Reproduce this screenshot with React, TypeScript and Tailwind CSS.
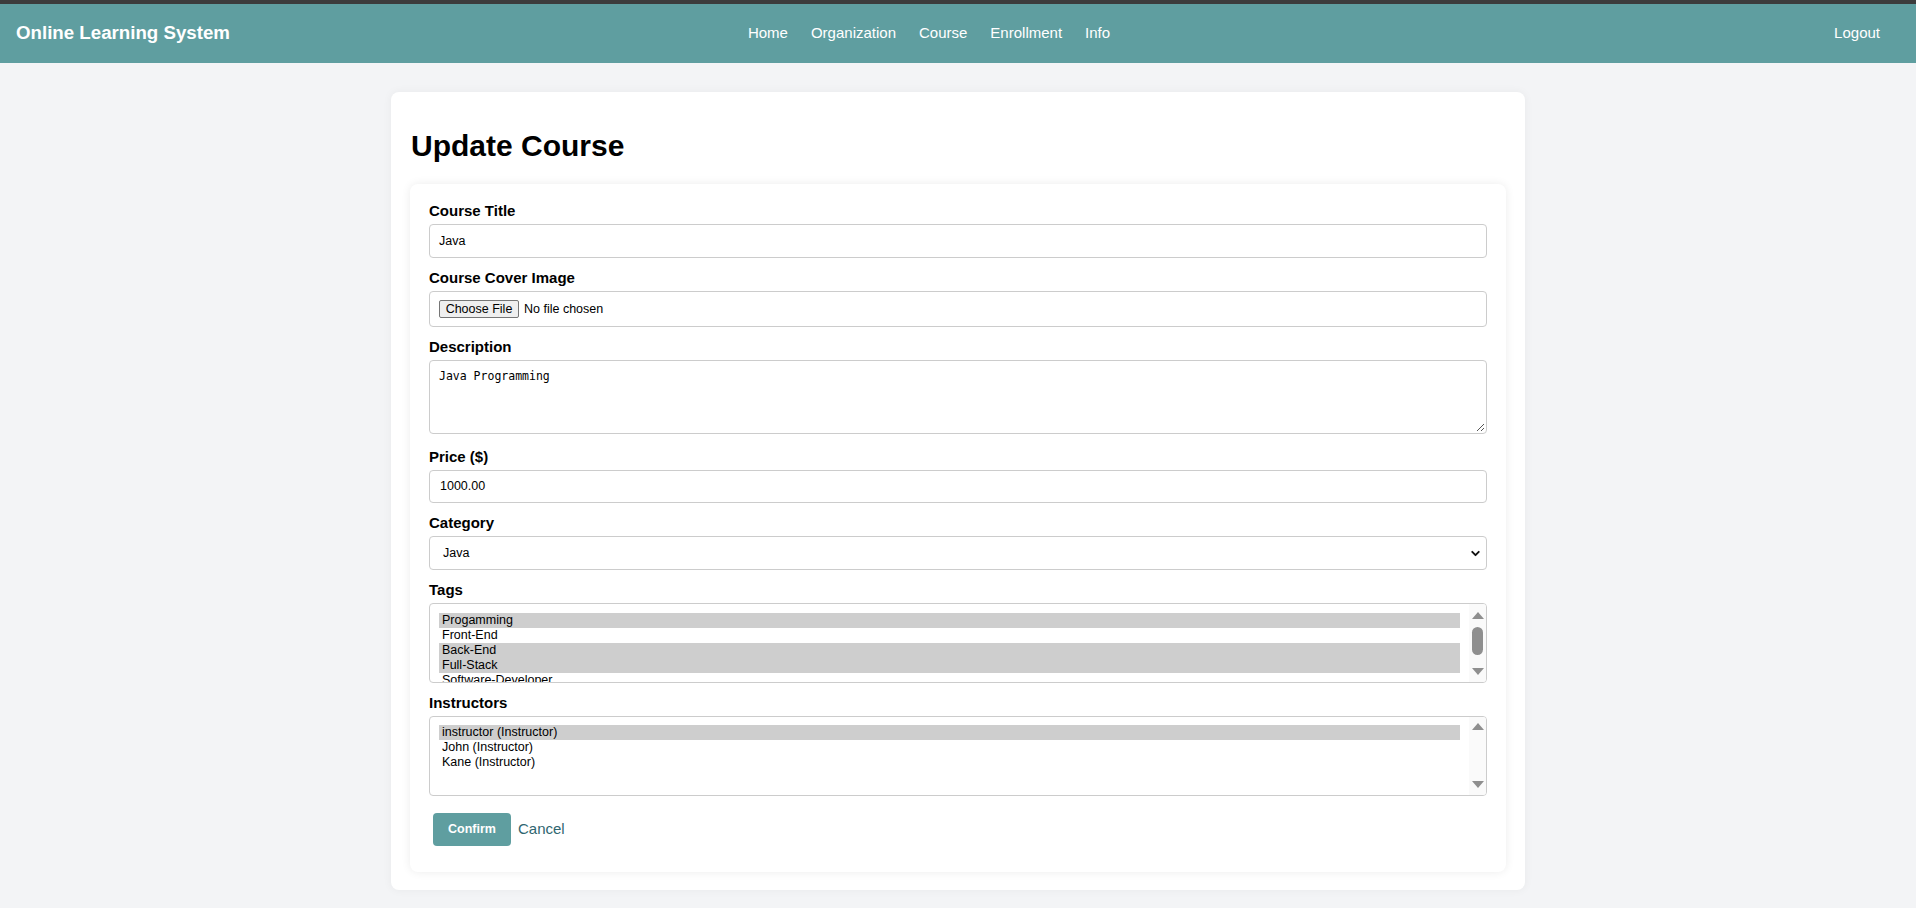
import { ChevronDown } from "lucide-react";

const links = ["Home", "Organization", "Course", "Enrollment", "Info"];

const tags = [
  { text: "Progamming", selected: true },
  { text: "Front-End", selected: false },
  { text: "Back-End", selected: true },
  { text: "Full-Stack", selected: true },
  { text: "Software-Developer", selected: false },
];

const instructors = [
  { text: "instructor (Instructor)", selected: true },
  { text: "John (Instructor)", selected: false },
  { text: "Kane (Instructor)", selected: false },
];

const Arrow = ({ up }: { up: boolean }) => (
  <svg width="12" height="7" viewBox="0 0 12 7">
    {up ? (
      <polygon points="6,0 12,7 0,7" fill="#8f8f8f" />
    ) : (
      <polygon points="0,0 12,0 6,7" fill="#8f8f8f" />
    )}
  </svg>
);

interface Row {
  text: string;
  selected: boolean;
}

const ListBox = ({ rows, thumb }: { rows: Row[]; thumb: boolean }) => {
  return (
    <div className="h-[80px] border border-[#ccc] rounded-[4px] flex overflow-hidden bg-white">
      <div className={`flex-1 px-[9px] overflow-hidden ${thumb ? "pt-[9px]" : "pt-[8px]"}`}>
        {rows.map((row, index) => (
          <div
            key={index}
            className={`h-[15px] leading-[15px] text-[12.5px] pl-[3px] whitespace-nowrap ${
              row.selected ? "bg-[#cecece]" : ""
            }`}
          >
            {row.text}
          </div>
        ))}
      </div>
      {thumb ? (
        <div className="w-[17px] bg-[#fafafa] flex flex-col items-center pt-[8px]">
          <Arrow up />
          <div className="mt-[8px] h-[28px] w-[11px] rounded-full bg-[#8f8f8f]"></div>
          <div className="mt-[13px] flex">
            <Arrow up={false} />
          </div>
        </div>
      ) : (
        <div className="w-[17px] bg-[#fafafa] flex flex-col items-center justify-between pt-[6px] pb-[7px]">
          <Arrow up />
          <Arrow up={false} />
        </div>
      )}
    </div>
  );
};

const Label = ({ text }: { text: string }) => (
  <label className="block text-[15px] font-bold leading-[18px] mb-[4px]">{text}</label>
);

const App = () => {
  return (
    <div className="min-h-screen bg-[#f3f4f6] font-['Liberation_Sans',Arial,sans-serif] text-black">
      <div className="h-[4px] bg-[#3c3c3c]"></div>
      <nav className="h-[59px] bg-[#5f9ea0] flex items-center px-4 text-white">
        <div className="text-[18.7px] font-bold">Online Learning System</div>
        <div className="flex gap-[23px] text-[15px] ml-[518px]">
          {links.map((link) => (
            <a key={link} href="#">
              {link}
            </a>
          ))}
        </div>
        <a href="#" className="ml-auto mr-[20px] text-[15px]">
          Logout
        </a>
      </nav>

      <div className="pt-[29px] pb-[19px]">
        <div className="mx-auto w-[1134px] bg-white rounded-lg shadow-[0_0_10px_rgba(0,0,0,0.05)] px-[19px] pt-[35px] pb-[18px]">
          <h1 className="text-[30px] font-bold leading-[37px] mb-[20px] pl-[1px]">Update Course</h1>

          <div className="rounded-lg bg-white shadow-[0_0_10px_rgba(0,0,0,0.08)] px-[19px] pt-[18px] pb-[26px]">
            <div className="mb-[11px]">
              <Label text="Course Title" />
              <div className="h-[34px] border border-[#ccc] rounded-[4px] px-[9px] flex items-center text-[12.5px]">
                Java
              </div>
            </div>

            <div className="mb-[11px]">
              <Label text="Course Cover Image" />
              <div className="h-[36px] border border-[#ccc] rounded-[4px] px-[9px] flex items-center text-[12.5px]">
                <span className="w-[80px] h-[18px] flex items-center justify-center border border-[#767676] bg-[#efefef] rounded-[2px]">
                  Choose File
                </span>
                <span className="ml-[5px]">No file chosen</span>
              </div>
            </div>

            <div className="mb-[14px]">
              <Label text="Description" />
              <div className="relative h-[74px] border border-[#ccc] rounded-[4px] px-[9px] pt-[8px] font-['DejaVu_Sans_Mono',monospace] text-[11.5px] leading-[15px]">
                Java Programming
                <svg className="absolute right-[2px] bottom-[2px]" width="8" height="8" viewBox="0 0 8 8">
                  <line x1="8" y1="1" x2="1" y2="8" stroke="#555" strokeWidth="1" />
                  <line x1="8" y1="5" x2="5" y2="8" stroke="#555" strokeWidth="1" />
                </svg>
              </div>
            </div>

            <div className="mb-[11px]">
              <Label text="Price ($)" />
              <div className="h-[33px] border border-[#ccc] rounded-[4px] px-[10px] flex items-center text-[12.5px]">
                1000.00
              </div>
            </div>

            <div className="mb-[11px]">
              <Label text="Category" />
              <div className="h-[34px] border border-[#ccc] rounded-[4px] pl-[13px] pr-[4px] flex items-center justify-between text-[12.5px]">
                <span>Java</span>
                <ChevronDown size={13} strokeWidth={3.5} color="#111" />
              </div>
            </div>

            <div className="mb-[11px]">
              <Label text="Tags" />
              <ListBox rows={tags} thumb />
            </div>

            <div>
              <Label text="Instructors" />
              <ListBox rows={instructors} thumb={false} />
            </div>

            <div className="flex items-center mt-[17px]">
              <button className="ml-[4px] w-[78px] h-[33px] rounded-[4px] bg-[#5f9ea0] text-white font-bold text-[12.5px]">
                Confirm
              </button>
              <a href="#" className="ml-[7px] text-[15px] text-[#2f6670]">
                Cancel
              </a>
            </div>
          </div>
        </div>
      </div>
    </div>
  );
};

export default App;
